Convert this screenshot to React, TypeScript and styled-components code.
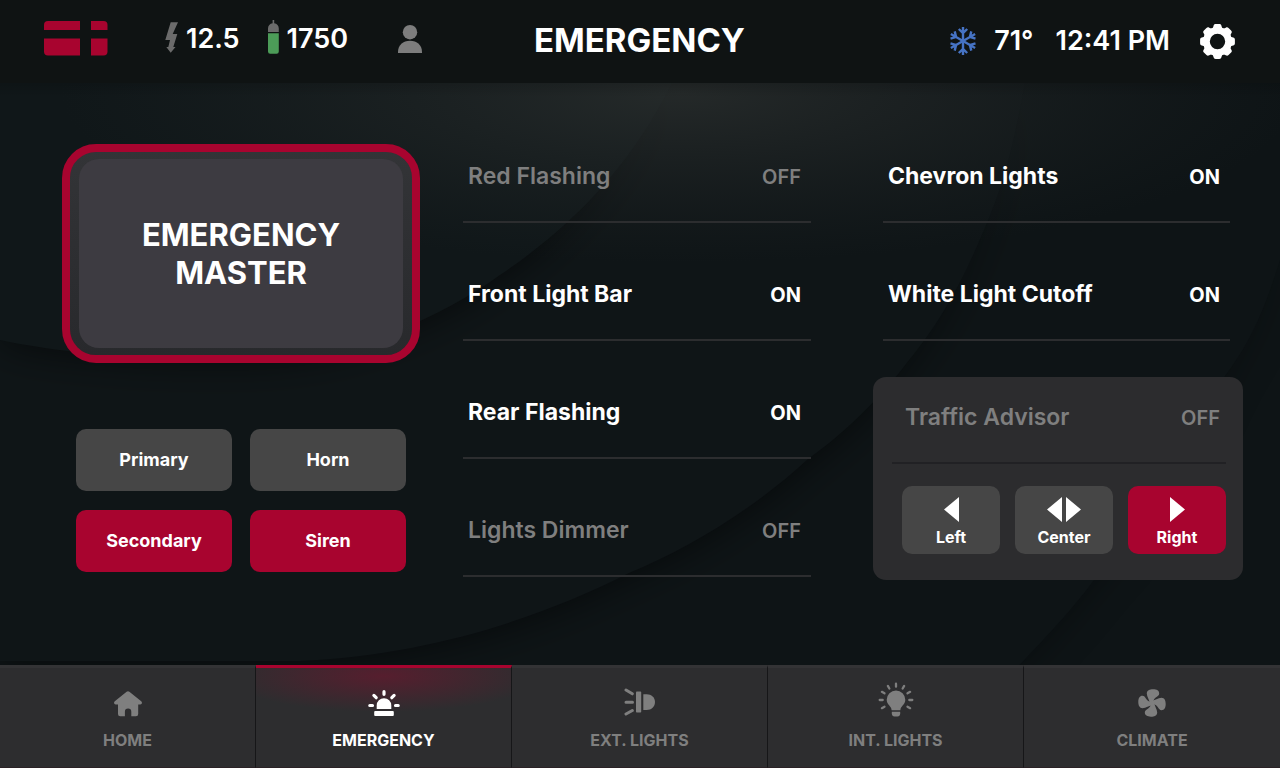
import React, { useState } from "react";
import styled, { createGlobalStyle, css } from "styled-components";

const color = {
  red: "#a8042f",
  dim: "#7f7f7f",
  button: "#464646",
  panel: "#2c2c2e",
  blue: "#4673c4",
};

const GlobalStyle = createGlobalStyle`
  * { box-sizing: border-box; }
  body {
    margin: 0;
    background: #0f1416;
    color: #fff;
    font-family: Inter, "Liberation Sans", sans-serif;
  }
  button {
    font-family: inherit;
    color: inherit;
    border: 0;
    margin: 0;
    cursor: pointer;
  }
`;

const Screen = styled.div`
  display: flex;
  flex-direction: column;
  min-height: 100vh;
`;

/* ---------- header ---------- */

const Header = styled.header`
  display: grid;
  grid-template-columns: 1fr auto 1fr;
  align-items: center;
  padding: 20px 45px 23px 44px;
  min-height: 83px;
  background: #0f1313;
`;

const HeaderSide = styled.div<{ $end?: boolean }>`
  display: flex;
  align-items: center;
  justify-content: ${(p) => (p.$end ? "flex-end" : "flex-start")};
  padding: ${(p) => (p.$end ? "2px 0 0" : "0 0 3px")};
`;

const Title = styled.h1`
  margin: 0;
  font-size: 33px;
  line-height: 40px;
  font-weight: 700;
`;

const Reading = styled.span<{ $gap?: number; $before?: number }>`
  display: flex;
  align-items: center;
  gap: ${(p) => p.$gap ?? 8}px;
  margin-left: ${(p) => p.$before ?? 28}px;
  font-size: 27px;
  line-height: 32px;
  font-weight: 600;
  white-space: nowrap;
`;

const IconButton = styled.button<{ $before: number }>`
  display: flex;
  padding: 0;
  margin-left: ${(p) => p.$before}px;
  background: none;
`;

/* ---------- main ---------- */

const Main = styled.main`
  position: relative;
  flex: 1;
  display: grid;
  grid-template-columns: 358fr 367fr 370fr;
  column-gap: 43px;
  align-items: start;
  padding: 22px 37px 48px 62px;
  isolation: isolate;
`;

const Backdrop = styled.svg`
  position: absolute;
  inset: 0;
  width: 100%;
  height: 100%;
  z-index: -1;
`;

const MasterColumn = styled.section`
  display: flex;
  flex-direction: column;
  gap: 66px;
  padding-top: 39px;
`;

const MasterButton = styled.button`
  display: flex;
  padding: 7px 9px;
  min-height: 219px;
  border: 8px solid ${color.red};
  border-radius: 34px;
  background: linear-gradient(#333437, #28292c);
`;

const MasterFace = styled.span`
  flex: 1;
  align-self: stretch;
  display: flex;
  flex-direction: column;
  align-items: center;
  justify-content: center;
  border-radius: 20px;
  background: #3d3b41;
  font-size: 31px;
  line-height: 38px;
  font-weight: 700;
`;

const SoundGrid = styled.div`
  display: grid;
  grid-template-columns: 1fr 1fr;
  gap: 19px 18px;
  margin: 0 14px;
`;

const buttonFace = css<{ $on: boolean }>`
  border-radius: 10px;
  background: ${(p) => (p.$on ? color.red : color.button)};
  font-weight: 700;
`;

const SoundButton = styled.button<{ $on: boolean }>`
  ${buttonFace}
  height: 62px;
  padding: 0 8px;
  font-size: 18px;
  line-height: 24px;
`;

const SwitchColumn = styled.section<{ $right: number; $left: number }>`
  display: flex;
  flex-direction: column;
  padding: 0 ${(p) => p.$right}px 0 ${(p) => p.$left}px;
`;

const SwitchRow = styled.button<{ $on: boolean; $inset?: boolean }>`
  display: flex;
  align-items: baseline;
  justify-content: space-between;
  height: ${(p) => (p.$inset ? 87 : 118)}px;
  padding: ${(p) => (p.$inset ? "27px 6px 0 13px" : "58px 10px 0 5px")};
  border-bottom: 2px solid ${(p) => (p.$inset ? "#212124" : "#2c2d2f")};
  background: none;
  color: ${(p) => (p.$on ? "#fff" : color.dim)};
  font-size: 23px;
  line-height: 26px;
  font-weight: ${(p) => (p.$on ? 700 : 600)};
  white-space: nowrap;
`;

const SwitchState = styled.span`
  font-size: 20px;
`;

const AdvisorColumn = styled.section`
  display: flex;
  flex-direction: column;
`;

const AdvisorCard = styled.div`
  display: flex;
  flex-direction: column;
  margin-top: 36px;
  padding: 0 17px 26px 19px;
  border-radius: 13px;
  background: ${color.panel};
`;

const DirectionGrid = styled.div`
  display: grid;
  grid-template-columns: repeat(3, 1fr);
  gap: 15px;
  margin: 22px 0 0 10px;
`;

const DirectionButton = styled.button<{ $on: boolean }>`
  ${buttonFace}
  display: flex;
  flex-direction: column;
  align-items: center;
  height: 68px;
  padding: 11px 0 0;
  font-size: 16px;
  line-height: 20px;
  gap: 4px;
`;

/* ---------- navigation ---------- */

const Nav = styled.nav`
  display: grid;
  grid-template-columns: repeat(5, 1fr);
  background: #2d2d2f;
`;

const NavLink = styled.a<{ $on: boolean }>`
  display: flex;
  flex-direction: column;
  align-items: center;
  gap: 13px;
  height: 103px;
  padding-top: 14px;
  border-top: 3px solid ${(p) => (p.$on ? color.red : "#333335")};
  border-bottom: 1px solid #2b2226;
  border-right: 1px solid #161618;
  background: ${(p) =>
    p.$on
      ? "radial-gradient(ellipse 62% 36px at 50% 8px, #561e2e, #2d2d2f)"
      : "none"};
  color: ${(p) => (p.$on ? "#fff" : color.dim)};
  font-size: 16px;
  line-height: 20px;
  font-weight: 700;
  text-decoration: none;

  &:last-child { border-right: 0; }
`;

const NavIcon = styled.span`
  display: flex;
  align-items: flex-end;
  height: 35px;
`;

/* ---------- drawings ---------- */

const Logo = () => (
  <svg width="64" height="35" viewBox="0 0 64 35" fill={color.red} role="img" aria-label="Logo">
    <path d="M4 0H36V9H0V4A4 4 0 0 1 4 0Z" />
    <path d="M47 0H59.500A4 4 0 0 1 63.500 4V9H47Z" />
    <path d="M0 17.500H36V34.500H4A4 4 0 0 1 0 30.500Z" />
    <path d="M47 17.500H63.500V30.500A4 4 0 0 1 59.500 34.500H47Z" />
  </svg>
);

const BoltIcon = () => (
  <svg width="13" height="34" viewBox="0 0 13 34" fill="#6b6b6b">
    <path d="M5.700 .3H13L7.700 12H12.300L8.300 25H10.500L5.700 30.700L1.300 25H3.300L5 18H.3Z" />
  </svg>
);

const TankIcon = () => (
  <svg width="11" height="37" viewBox="0 0 11 37">
    <path fill="#6b6b6b" d="M4.600 0H6.200V3.200C9 3.600 10.800 5.600 10.800 8.400V12H0V8.400C0 5.600 1.900 3.600 4.600 3.200Z" />
    <path fill="#4c9c58" d="M0 13.200H10.800V31.500A2.200 2.200 0 0 1 8.600 33.700H2.200A2.200 2.200 0 0 1 0 31.500Z" />
  </svg>
);

const PersonIcon = () => (
  <svg width="24" height="28" viewBox="0 0 24 28" fill="#7d7d7d">
    <circle cx="12" cy="7.200" r="7.200" />
    <path d="M0 28V27C0 20 5 15.700 12 15.700S24 20 24 27V28Z" />
  </svg>
);

const SnowIcon = () => (
  <svg width="26" height="28" viewBox="-13 -14 26 28" fill="none" stroke={color.blue} strokeWidth="2.400">
    {[0, 60, 120, 180, 240, 300].map((a) => (
      <path key={a} transform={`rotate(${a})`} d="M0 0V-14M-4.200 -12L0 -8L4.200 -12" />
    ))}
  </svg>
);

const GearIcon = () => (
  <svg width="35" height="35" viewBox="-17.500 -17.500 35 35">
    <circle r="11" fill="none" stroke="#fff" strokeWidth="6.600" />
    {[0, 45, 90, 135, 180, 225, 270, 315].map((a) => (
      <path
        key={a}
        transform={`rotate(${a})`}
        fill="#fff"
        d="M-6 -12.800C-4.500 -13.400 -4.300 -14.500 -4 -15.600C-3.700 -16.900 -3 -17.400 -1.800 -17.400H1.800C3 -17.400 3.700 -16.900 4 -15.600C4.300 -14.500 4.500 -13.400 6 -12.800L3 -10H-3Z"
      />
    ))}
  </svg>
);

const HomeIcon = () => (
  <svg width="28" height="26" viewBox="0 0 28 26" fill="currentColor">
    <path d="M12.600 .7Q14 -.4 15.400 .7L27.200 10.200Q28.300 11.300 27.800 12.500Q27.300 13.500 26 13.500H24.200V23Q24.200 25.200 22 25.200H17.300V20.800A3.200 3.200 0 0 0 10.900 20.800V25.200H6.200Q4 25.200 4 23V13.500H2Q.7 13.500 .2 12.500Q-.3 11.300 .8 10.200Z" />
  </svg>
);

const SirenIcon = () => (
  <svg width="32" height="27" viewBox="0 0 32 27" fill="currentColor">
    <path d="M8.700 19V15.500A7.300 7.300 0 0 1 23.300 15.500V19Z" />
    <rect x="6.200" y="20.900" width="19.600" height="5" rx="1" />
    <g stroke="currentColor" strokeWidth="3.200" strokeLinecap="round">
      <path d="M16 1.700V4.300M5.900 5.400L8.200 7.700M26.100 5.400L23.800 7.700M1.800 15.500H4.500M30.200 15.500H27.500" />
    </g>
  </svg>
);

const HeadlightIcon = () => (
  <svg width="32" height="29" viewBox="0 0 32 29" fill="currentColor">
    <rect x="12" y="3.600" width="5.200" height="21" rx=".8" />
    <path d="M19.300 6.200H22.600C27.500 6.200 31 9.500 31 14S27.500 22 22.600 22H19.300Z" />
    <path
      fill="none"
      stroke="currentColor"
      strokeWidth="3"
      strokeLinecap="round"
      d="M2 2L8.300 5.800M2 14.200H8.500M2 26L8.300 22.500"
    />
  </svg>
);

const BulbIcon = () => (
  <svg width="36" height="35" viewBox="-18 -18 36 35" fill="currentColor">
    <path d="M0 -9.500A9.300 9.300 0 0 1 9.300 -.2C9.300 5 4.400 6 4.400 10.200H-4.400C-4.400 6 -9.300 5 -9.300 -.2A9.300 9.300 0 0 1 0 -9.500Z" />
    <path d="M-4.200 11.800H4.200V13.500Q4 16.500 1.500 16.500H-1.500Q-4 16.500 -4.200 13.500Z" />
    <g stroke="currentColor" strokeWidth="2.300" strokeLinecap="round">
      {[-120, -90, -60, -30, 0, 30, 60, 90, 120].map((a) => (
        <path key={a} transform={`rotate(${a})`} d="M0 -16.300V-13.300" />
      ))}
    </g>
  </svg>
);

const FanIcon = () => (
  <svg width="28" height="28" viewBox="-14 -14 28 28" fill="currentColor">
    {[0, 90, 180, 270].map((a) => (
      <path
        key={a}
        transform={`rotate(${a})`}
        d="M-2 1C-2.300 -3 -5.200 -6 -5.200 -9.500C-5.200 -12.500 -2.300 -13.700 1 -13.700C4.800 -13.700 7.200 -12.300 7.200 -9.600C7.200 -6 2 -6.500 1.300 -1.500L1 1Z"
      />
    ))}
  </svg>
);

const arrows = {
  Left: "M15 0V25L0 12.500Z",
  Center: "M15 0V25L0 12.500ZM19 0V25L34 12.500Z",
  Right: "M0 0V25L15 12.500Z",
};

const ArrowIcon = ({ kind }: { kind: keyof typeof arrows }) => {
  const width = kind === "Center" ? 34 : 15;
  return (
    <svg width={width} height="26" viewBox={`0 0 ${width} 26`} fill="#fff">
      <path d={arrows[kind]} />
    </svg>
  );
};

const waveFar = "M1290 140C1270 220 1250 260 1225 293C1190 370 1150 440 1094 497C1070 530 1040 560 1012 590H0V0H1290Z";
const waveMiddle = "M1025 0C1015 55 1005 100 984 147C962 200 940 240 906 281C880 315 845 350 808 376C755 425 690 465 629 490C540 535 430 572 300 578H0V0Z";
const waveNear = "M672 0C630 85 570 145 500 192C440 235 360 272 250 276C150 278 60 270 0 257V0Z";

const Waves = () => (
  <Backdrop viewBox="0 0 1280 582" preserveAspectRatio="none" aria-hidden="true">
    <defs>
      <radialGradient id="glow" gradientUnits="userSpaceOnUse" cx="0" cy="0" r="1" gradientTransform="translate(680 10) scale(620 170)">
        <stop offset="0" stopColor="#3a3d3b" stopOpacity=".5" />
        <stop offset="1" stopColor="#2a2e2e" stopOpacity="0" />
      </radialGradient>
      <linearGradient id="edge" x1="0" x2="0" y1="0" y2="1">
        <stop offset="0" stopColor="#000" stopOpacity=".14" />
        <stop offset="1" stopColor="#000" stopOpacity="0" />
      </linearGradient>
      <linearGradient id="fade" x1="0" x2="0" y1="0" y2="1">
        <stop offset="0" stopColor="#04080a" stopOpacity="0" />
        <stop offset=".6" stopColor="#04080a" stopOpacity=".6" />
      </linearGradient>
      <filter id="soft" x="-20%" y="-20%" width="140%" height="140%">
        <feGaussianBlur stdDeviation="20" />
      </filter>
    </defs>
    <rect width="1280" height="582" fill="#0e1416" />
    <path d={waveFar} fill="url(#fade)" opacity=".6" filter="url(#soft)" />
    <path d={waveFar} fill="#0e1416" />
    <path d={waveMiddle} fill="url(#fade)" filter="url(#soft)" />
    <path d={waveMiddle} fill="#0f1517" />
    <path d={waveNear} fill="url(#fade)" filter="url(#soft)" />
    <path d={waveNear} fill="#101719" />
    <rect width="1280" height="582" fill="url(#glow)" />
    <rect width="1280" height="14" fill="url(#edge)" />
  </Backdrop>
);

/* ---------- page ---------- */

const leftSwitches = ["Red Flashing", "Front Light Bar", "Rear Flashing", "Lights Dimmer"];
const rightSwitches = ["Chevron Lights", "White Light Cutoff"];
const sounds = ["Primary", "Horn", "Secondary", "Siren"];
const directions = ["Left", "Center", "Right"] as const;
const pages = [
  { label: "HOME", Icon: HomeIcon },
  { label: "EMERGENCY", Icon: SirenIcon },
  { label: "EXT. LIGHTS", Icon: HeadlightIcon },
  { label: "INT. LIGHTS", Icon: BulbIcon },
  { label: "CLIMATE", Icon: FanIcon },
];

export default function App() {
  const [on, setOn] = useState<Record<string, boolean>>({
    Master: true,
    "Front Light Bar": true,
    "Rear Flashing": true,
    "Chevron Lights": true,
    "White Light Cutoff": true,
    Secondary: true,
    Siren: true,
  });
  const [direction, setDirection] = useState<string>("Right");
  const toggle = (name: string) => setOn((s) => ({ ...s, [name]: !s[name] }));

  const renderSwitch = (name: string, inset = false) => (
    <SwitchRow key={name} type="button" $on={!!on[name]} $inset={inset} aria-pressed={!!on[name]} onClick={() => toggle(name)}>
      <span>{name}</span>
      <SwitchState>{on[name] ? "ON" : "OFF"}</SwitchState>
    </SwitchRow>
  );

  return (
    <Screen>
      <GlobalStyle />
      <Header>
        <HeaderSide>
          <Logo />
          <Reading $before={57}>
            <BoltIcon />
            12.5
          </Reading>
          <Reading>
            <TankIcon />
            1750
          </Reading>
          <IconButton type="button" aria-label="Profile" $before={50}>
            <PersonIcon />
          </IconButton>
        </HeaderSide>
        <Title>EMERGENCY</Title>
        <HeaderSide $end>
          <Reading $gap={18}>
            <SnowIcon />
            71°
          </Reading>
          <Reading $before={22}>12:41 PM</Reading>
          <IconButton type="button" aria-label="Settings" $before={30}>
            <GearIcon />
          </IconButton>
        </HeaderSide>
      </Header>

      <Main>
        <Waves />
        <MasterColumn>
          <MasterButton type="button" aria-pressed={!!on.Master} onClick={() => toggle("Master")}>
            <MasterFace>
              <span>EMERGENCY</span>
              <span>MASTER</span>
            </MasterFace>
          </MasterButton>
          <SoundGrid>
            {sounds.map((name) => (
              <SoundButton key={name} type="button" $on={!!on[name]} aria-pressed={!!on[name]} onClick={() => toggle(name)}>
                {name}
              </SoundButton>
            ))}
          </SoundGrid>
        </MasterColumn>

        <SwitchColumn $left={0} $right={19}>
          {leftSwitches.map((name) => renderSwitch(name))}
        </SwitchColumn>

        <AdvisorColumn>
          <SwitchColumn $left={10} $right={13}>
            {rightSwitches.map((name) => renderSwitch(name))}
          </SwitchColumn>
          <AdvisorCard>
            {renderSwitch("Traffic Advisor", true)}
            <DirectionGrid>
              {directions.map((name) => (
                <DirectionButton key={name} type="button" $on={direction === name} aria-pressed={direction === name} onClick={() => setDirection(name)}>
                  <ArrowIcon kind={name} />
                  {name}
                </DirectionButton>
              ))}
            </DirectionGrid>
          </AdvisorCard>
        </AdvisorColumn>
      </Main>

      <Nav>
        {pages.map(({ label, Icon }) => (
          <NavLink key={label} href="#" $on={label === "EMERGENCY"}>
            <NavIcon>
              <Icon />
            </NavIcon>
            {label}
          </NavLink>
        ))}
      </Nav>
    </Screen>
  );
}
